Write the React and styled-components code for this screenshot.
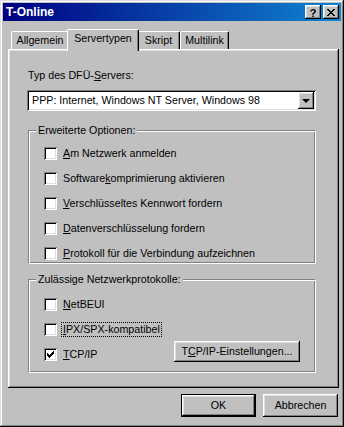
import styled, { createGlobalStyle } from "styled-components";

const GlobalStyle = createGlobalStyle`
  html, body {
    margin: 0;
    padding: 0;
    background: #c0c0c0;
  }
  body {
    font-family: "Liberation Sans", Arial, sans-serif;
    font-size: 10.7px;
    color: #000;
  }
  * { box-sizing: border-box; }
`;

const raised = `
  box-shadow: inset -1px -1px #000, inset 1px 1px #fff, inset -2px -2px #808080, inset 2px 2px #dfdfdf;
`;

const sunken = `
  box-shadow: inset 1px 1px #808080, inset -1px -1px #fff, inset 2px 2px #000, inset -2px -2px #dfdfdf;
`;

const CHECK = [
  [6, 0], [5, 1], [6, 1], [0, 2], [4, 2], [5, 2], [6, 2],
  [0, 3], [1, 3], [3, 3], [4, 3], [5, 3],
  [0, 4], [1, 4], [2, 4], [3, 4], [4, 4],
  [1, 5], [2, 5], [3, 5], [2, 6],
];

const CLOSE = [
  [0, 0], [1, 0], [6, 0], [7, 0],
  [1, 1], [2, 1], [5, 1], [6, 1],
  [2, 2], [3, 2], [4, 2], [5, 2],
  [3, 3], [4, 3],
  [2, 4], [3, 4], [4, 4], [5, 4],
  [1, 5], [2, 5], [5, 5], [6, 5],
  [0, 6], [1, 6], [6, 6], [7, 6],
];

const Pixels = ({ dots, w, h }) => (
  <svg width={w} height={h} viewBox={`0 0 ${w} ${h}`} shapeRendering="crispEdges">
    {dots.map(([x, y]) => (
      <rect key={`${x}-${y}`} x={x} y={y} width="1" height="1" fill="#000" />
    ))}
  </svg>
);

const CheckBox = ({ checked }) => (
  <Box>{checked && <Pixels dots={CHECK} w={7} h={7} />}</Box>
);

const Option = ({ checked, focus, children }) => (
  <OptionRow>
    <CheckBox checked={checked} />
    <OptionText $focus={focus}>{children}</OptionText>
  </OptionRow>
);

const App = () => {
  return (
    <>
      <GlobalStyle />
      <Window>
        <TitleBar>
          <Title>T-Online</Title>
          <TitleButtons>
            <TitleButton>?</TitleButton>
            <TitleButton>
              <Pixels dots={CLOSE} w={8} h={7} />
            </TitleButton>
          </TitleButtons>
        </TitleBar>

        <Body>
          <TabStrip>
            <Tab $w={58}>Allgemein</Tab>
            <Tab $w={68} $active>Servertypen</Tab>
            <Tab $w={43}>Skript</Tab>
            <Tab $w={49}>Multilink</Tab>
          </TabStrip>

          <Panel>
            <FieldLabel>
              Typ des DFÜ-<u>S</u>ervers:
            </FieldLabel>
            <Select>
              <SelectText>PPP: Internet, Windows NT Server, Windows 98</SelectText>
              <DropButton>
                <Arrow />
              </DropButton>
            </Select>

            <Group $pt={16} $pb={3} $mt={19}>
              <Legend>Erweiterte Optionen:</Legend>
              <OptionList>
                <Option><u>A</u>m Netzwerk anmelden</Option>
                <Option>Software<u>k</u>omprimierung aktivieren</Option>
                <Option><u>V</u>erschlüsseltes Kennwort fordern</Option>
                <Option><u>D</u>atenverschlüsselung fordern</Option>
                <Option><u>P</u>rotokoll für die Verbindung aufzeichnen</Option>
              </OptionList>
            </Group>

            <Group $pt={18} $pb={10} $mt={15}>
              <Legend>Zulässige Netzwerkprotokolle:</Legend>
              <OptionList>
                <Option><u>N</u>etBEUI</Option>
                <Option focus><u>I</u>PX/SPX-kompatibel</Option>
                <SettingsRow>
                  <Option checked><u>T</u>CP/IP</Option>
                  <Button $w={126} $h={21}>
                    T<u>C</u>P/IP-Einstellungen...
                  </Button>
                </SettingsRow>
              </OptionList>
            </Group>
          </Panel>

          <Footer>
            <Button $default>OK</Button>
            <Button>Abbrechen</Button>
          </Footer>
        </Body>
      </Window>
    </>
  );
};

export default App;

const Window = styled.div`
  width: 344px;
  height: 427px;
  padding: 3px;
  background: #c0c0c0;
  box-shadow: inset -1px -1px #000, inset 1px 1px #dfdfdf, inset -2px -2px #808080, inset 2px 2px #fff;
  display: flex;
  flex-direction: column;
`;

const TitleBar = styled.div`
  height: 18px;
  display: flex;
  align-items: center;
  justify-content: space-between;
  padding: 0 2px 0 3px;
  background: linear-gradient(to right, #000080, #1084d0);
`;

const Title = styled.div`
  color: #fff;
  font-weight: bold;
  font-size: 12px;
  line-height: 18px;
`;

const TitleButtons = styled.div`
  display: flex;
  gap: 2px;
`;

const TitleButton = styled.div`
  width: 16px;
  height: 14px;
  background: #c0c0c0;
  ${raised}
  display: flex;
  align-items: center;
  justify-content: center;
  font-weight: bold;
  font-size: 11px;
  line-height: 14px;
  padding-top: 1px;
`;

const Body = styled.div`
  flex: 1;
  display: flex;
  flex-direction: column;
  padding: 8px 2px 0 5px;
`;

const TabStrip = styled.div`
  display: flex;
  align-items: flex-end;
  padding-left: 3px;
`;

const Tab = styled.div`
  position: relative;
  width: ${(p) => (p.$active ? p.$w + 4 : p.$w)}px;
  height: ${(p) => (p.$active ? 22 : 18)}px;
  margin: ${(p) => (p.$active ? "0 -2px -2px -2px" : "0")};
  z-index: ${(p) => (p.$active ? 2 : 1)};
  background: #c0c0c0;
  border-top: 1px solid #fff;
  border-left: 1px solid #fff;
  border-right: 1px solid #000;
  border-radius: 2px 2px 0 0;
  box-shadow: inset -1px 0 #808080;
  text-align: center;
  line-height: 13px;
  padding-top: 2px;
  white-space: nowrap;
`;

const Panel = styled.div`
  height: 339px;
  display: flex;
  flex-direction: column;
  padding: 20px 19px 0 19px;
  ${raised}
`;

const FieldLabel = styled.div`
  line-height: 13px;
  padding-left: 1px;
`;

const Select = styled.div`
  margin-top: 8px;
  width: 289px;
  height: 21px;
  display: flex;
  align-items: center;
  justify-content: space-between;
  padding: 2px;
  background: #fff;
  ${sunken}
`;

const SelectText = styled.div`
  padding-left: 3px;
  line-height: 13px;
  white-space: nowrap;
`;

const DropButton = styled.div`
  width: 16px;
  height: 17px;
  background: #c0c0c0;
  ${raised}
  display: flex;
  align-items: center;
  justify-content: center;
`;

const Arrow = styled.div`
  width: 0;
  height: 0;
  border-left: 4px solid transparent;
  border-right: 4px solid transparent;
  border-top: 4px solid #000;
  margin-top: 1px;
`;

const Group = styled.div`
  position: relative;
  margin-top: ${(p) => p.$mt}px;
  margin-left: 1px;
  width: 288px;
  padding: ${(p) => p.$pt}px 15px ${(p) => p.$pb}px 15px;
  border-style: solid;
  border-width: 1px;
  border-color: #808080 #fff #fff #808080;
  box-shadow: inset 1px 1px #fff, inset -1px -1px #808080;
`;

const Legend = styled.div`
  position: absolute;
  top: -7px;
  left: 7px;
  padding: 0 2px;
  background: #c0c0c0;
  line-height: 13px;
  white-space: nowrap;
`;

const OptionList = styled.div`
  display: flex;
  flex-direction: column;
  gap: 12px;
`;

const OptionRow = styled.div`
  display: flex;
  align-items: center;
  gap: 5px;
  height: 13px;
`;

const Box = styled.div`
  width: 13px;
  height: 13px;
  flex-shrink: 0;
  background: #fff;
  ${sunken}
  display: flex;
  align-items: center;
  justify-content: center;
`;

const OptionText = styled.span`
  line-height: 13px;
  padding: 0 1px;
  white-space: nowrap;
  outline: ${(p) => (p.$focus ? "1px dotted #000" : "none")};
`;

const SettingsRow = styled.div`
  display: flex;
  align-items: flex-start;
  justify-content: space-between;
  margin-top: -7px;

  & > ${OptionRow} {
    margin-top: 7px;
  }
`;

const Button = styled.div`
  width: ${(p) => p.$w || 75}px;
  height: ${(p) => p.$h || 23}px;
  display: flex;
  align-items: center;
  justify-content: center;
  background: #c0c0c0;
  line-height: 13px;
  white-space: nowrap;
  ${raised}
  ${(p) => p.$default && `
    border: 1px solid #000;
  `}
`;

const Footer = styled.div`
  display: flex;
  justify-content: flex-end;
  gap: 7px;
  margin-top: 6px;
  padding-right: 1px;
`;
